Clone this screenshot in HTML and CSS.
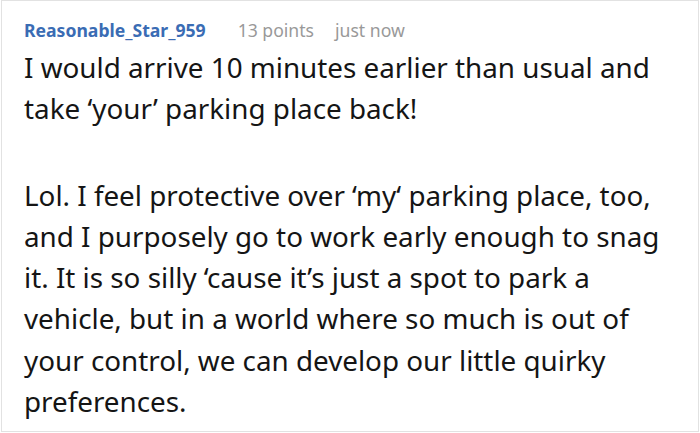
FILE: index.html
```html
<!DOCTYPE html>
<html>
<head>
<meta charset="utf-8">
<link rel="stylesheet" href="styles.css">
</head>
<body>
<div class="comment">
  <div class="meta">
    <span class="author">Reasonable_Star_959</span>
    <span class="info points">13 points</span>
    <span class="info time">just now</span>
  </div>
  <div class="body">
    <p>I would arrive 10 minutes earlier than usual and take ‘your’ parking place back!</p>
    <p>Lol. I feel protective over ‘my‘ parking place, too, and I purposely go to work early enough to snag it. It is so silly ‘cause it’s just a spot to park a vehicle, but in a world where so much is out of your control, we can develop our little quirky preferences.</p>
  </div>
</div>
</body>
</html>
```
FILE: styles.css
```css
html, body {
  margin: 0;
  padding: 0;
  background: #fff;
}
.comment {
  box-sizing: border-box;
  width: 698px;
  height: 432px;
  margin-left: 1px;
  border: 1px solid #e2e2e2;
  padding: 17px 20px 0 22px;
  font-family: "Noto Sans", sans-serif;
  color: #151515;
}
.meta {
  display: flex;
  align-items: baseline;
  font-size: 17.6px;
  line-height: 24px;
}
.author {
  font-weight: bold;
  color: #3a6cb4;
}
.info {
  color: #999;
}
.points {
  margin-left: 32px;
}
.time {
  margin-left: 21px;
}
.body {
  margin-top: 5px;
  font-size: 27.8px;
  line-height: 41.3px;
}
.body p {
  margin: 0 0 45px 0;
}
```
